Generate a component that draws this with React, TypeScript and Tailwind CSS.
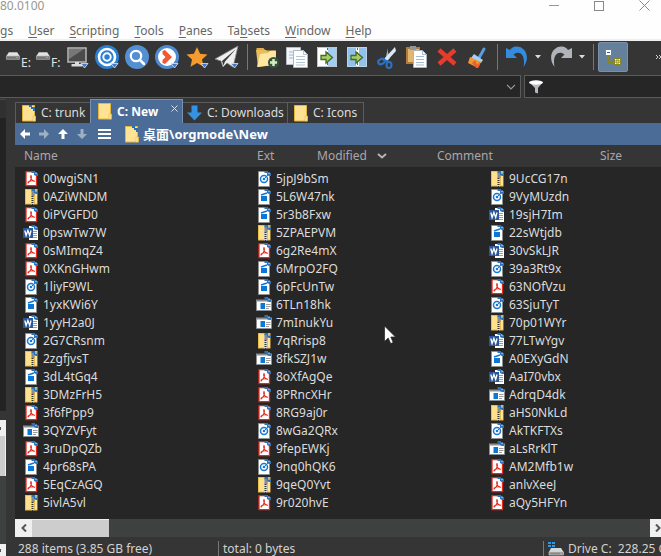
import React from 'react';

type Kind = 'pdf' | 'zip' | 'word' | 'disc' | 'exe' | 'app';

const kinds: Record<string, Kind> = { p: 'pdf', z: 'zip', w: 'word', d: 'disc', e: 'exe', a: 'app' };

const columns: string[][] = [
  ['p 00wgiSN1', 'z 0AZiWNDM', 'p 0iPVGFD0', 'w 0pswTw7W', 'p 0sMImqZ4', 'p 0XKnGHwm', 'd 1liyF9WL', 'e 1yxKWi6Y', 'w 1yyH2a0J', 'd 2G7CRsnm', 'z 2zgfjvsT', 'e 3dL4tGq4', 'z 3DMzFrH5', 'p 3f6fPpp9', 'a 3QYZVFyt', 'p 3ruDpQZb', 'e 4pr68sPA', 'p 5EqCzAGQ', 'z 5ivlA5vl'],
  ['d 5jpJ9bSm', 'e 5L6W47nk', 'e 5r3b8Fxw', 'z 5ZPAEPVM', 'p 6g2Re4mX', 'e 6MrpO2FQ', 'e 6pFcUnTw', 'a 6TLn18hk', 'a 7mInukYu', 'z 7qRrisp8', 'a 8fkSZJ1w', 'p 8oXfAgQe', 'p 8PRncXHr', 'p 8RG9aj0r', 'd 8wGa2QRx', 'p 9fepEWKj', 'd 9nq0hQK6', 'z 9qeQ0Yvt', 'p 9r020hvE'],
  ['z 9UcCG17n', 'd 9VyMUzdn', 'w 19sjH7Im', 'e 22sWtjdb', 'w 30vSkLJR', 'd 39a3Rt9x', 'p 63NOfVzu', 'd 63SjuTyT', 'z 70p01WYr', 'w 77LTwYgv', 'e A0EXyGdN', 'w AaI70vbx', 'a AdrqD4dk', 'z aHS0NkLd', 'd AkTKFTXs', 'a aLsRrKlT', 'p AM2Mfb1w', 'p anlvXeeJ', 'p aQy5HFYn'],
];

function FileIcon({ kind }: { kind: Kind }) {
  return (
    <svg width="16" height="16" viewBox="0 0 16 16" className="shrink-0" aria-hidden="true">
      {kind === 'pdf' && (
        <>
          <path d="M3 .7h8l2.500 2.500v11.500H3z" fill="#fff" stroke="#e8271b" strokeWidth="1.300" strokeLinejoin="round" />
          <path d="M8 4.500c1.200 2.500.2 4.700-3 7.500M8 4.500c-1.200 2.500.5 5 3.500 5.800M5 11.700c-.3-1.300 4-2.700 6.500-1.500" fill="none" stroke="#e8271b" strokeWidth="1.100" strokeLinecap="round" />
        </>
      )}
      {kind === 'zip' && (
        <>
          <path d="M2 0h12.500v15.500H2z" fill="#e9bd4c" />
          <path d="M3 1h5v13.500H3z" fill="#ffe08b" />
          <path d="M12 2h2v12.500h-2z" fill="#ffe59a" />
          <path d="M8 3h3v13H8z" fill="#d9d9d9" />
          <path d="M8.500 2h3v5h-3z" fill="#8b8b8b" />
          <path d="M9.500 7v9" stroke="#333" strokeWidth="2" strokeDasharray="1 1" />
        </>
      )}
      {kind === 'word' && (
        <>
          <path d="M6 1h6l3 3v11H6z" fill="#fff" />
          <path d="M9 6.500h5M9 8.500h5M9 10.500h5M9 12.500h5" stroke="#9b9b9b" />
          <path d="M0 3h10v10H0z" fill="#2b579a" />
          <path d="m1.800 5.500 1.300 5 1.800-5 1.800 5 1.300-5" fill="none" stroke="#fff" strokeWidth="1.300" />
        </>
      )}
      {(kind === 'disc' || kind === 'exe') && (
        <path d="M2.500.5h8L13.500 4v11.500h-11z" fill="#fff" stroke="#8f8f8f" />
      )}
      {kind === 'disc' && (
        <>
          <circle cx="8" cy="8" r="3.500" fill="#fff" stroke="#1879d2" strokeWidth="1.500" />
          <circle cx="8" cy="8" r="1.300" fill="#1879d2" />
          <path d="M9 7l3-3" stroke="#1879d2" />
        </>
      )}
      {kind === 'exe' && (
        <>
          <path d="M5 7h6v5H5z" fill="#0b78d8" />
          <path d="m5 6 6-2" stroke="#0b78d8" strokeWidth="1.500" />
        </>
      )}
      {kind === 'app' && (
        <>
          <path d="M.5 3.500h15v10H.5z" fill="#fff" stroke="#8b8f92" />
          <path d="M0 2.500h16v2H0z" fill="#8b8f92" />
          <path d="M4.500 6h4.500v6H4.500z" fill="#0b78d8" />
          <path d="M10 7.500h4.500M10 9.500h4.500M10 11.500h3" stroke="#9b9b9b" />
        </>
      )}
      <path d="M8.500 0h3.500v2H8.500zM11 2h4v3h-2l-2-1z" fill="#2b73bd" />
      <path d="M12 1.500h2v1.500h-2z" fill="#79aede" />
    </svg>
  );
}

function FolderIcon({ synced = false }: { synced?: boolean }) {
  return (
    <svg width="14" height="17" viewBox="0 0 14 17" className="shrink-0" aria-hidden="true">
      <path d="M.5.500h12v10.500h1v5H.5z" fill="#ffe293" stroke="#e6b63c" />
      <path d="M11 11h2v5h-2z" fill="#ffeeb5" stroke="#e6b63c" strokeWidth=".6" />
      {synced && <path d="M7 0h3v2h3v4h-2V4H9V2H7z" fill="#2471b8" />}
    </svg>
  );
}

const mark = <path d="M16 18.500h7l-3.500 4.500z" fill="#4a78bd" stroke="#dbe8fa" strokeWidth=".8" />;

function Drive() {
  return (
    <>
      <path d="M4 7h9l2.500 4h-14z" fill="#e2e2e2" />
      <path d="M1.500 11h14v3.500h-14z" fill="#777" stroke="#b9b9b9" strokeWidth=".7" />
      <path d="M12 12.500h2" stroke="#70dd49" />
    </>
  );
}

const pages = (
  <>
    <path d="M1.500 2.500h14v17h-14z" fill="#f3f5f8" stroke="#b5bbc4" />
    <path d="M4 7h9M4 10h9M4 13h9" stroke="#9fb6ce" />
    <path d="M8.500 5.500h10l4 4v13h-14z" fill="#fff" stroke="#aeb6c0" />
    <path d="M18.500 5.500v4h4M11 11.500h9M11 14.500h9M11 17.500h9M11 20h9" fill="none" stroke="#b5c6d8" />
  </>
);

const transferArrow = <path d="M6 10.500h5V7l6.500 5.500L11 18v-3.500H6z" fill="#a9cc68" stroke="#446b20" strokeWidth="1.300" />;

const leftTools: { name: string; art: React.ReactNode; drive?: string }[] = [
  { name: 'Drive E', art: <Drive />, drive: 'E:' },
  { name: 'Drive F', art: <Drive />, drive: 'F:' },
  { name: 'Computer', art: <><path d="M3 3h18v14H3z" fill="#4b4b4b" stroke="#b8b8b8" strokeWidth="1.500" /><path d="M4 4h15L4 14z" fill="#777" /><path d="M10 17h4v4h-4zM6.500 19h11v2.500h-11z" fill="#ddd" />{mark}</> },
  { name: 'Target', art: <><circle cx="12" cy="12" r="12" fill="#2a7fd3" /><circle cx="12" cy="12" r="8" fill="none" stroke="#fff" strokeWidth="2.600" /><circle cx="12" cy="12" r="3.700" fill="#2a7fd3" stroke="#fff" strokeWidth="2" />{mark}</> },
  { name: 'Search', art: <><circle cx="12" cy="12" r="12" fill="#548fd2" /><circle cx="11" cy="11" r="5.200" fill="none" stroke="#fff" strokeWidth="2.200" /><path d="m15 15 4 4" stroke="#fff" strokeWidth="2.500" strokeLinecap="round" /></> },
  { name: 'Go to', art: <><circle cx="12" cy="12" r="10.500" fill="#fff" stroke="#4e8bd0" strokeWidth="3" /><path d="M7.500 6 10 5l7 7-7 7-2.500-1v-3l3-3-3-3z" fill="#f05a35" />{mark}</> },
  { name: 'Favorites', art: <><path d="m12 2 3.100 6.700 7.400.8-5.500 5 1.500 7.200L12 18l-6.500 3.700L7 14.500l-5.500-5 7.400-.8z" fill="#f49a2e" />{mark}</> },
  { name: 'Send', art: <><path d="M23 1 0 14l6 2 2 6 4-4 6 4z" fill="#efefef" stroke="#8a8a8a" strokeWidth=".8" strokeLinejoin="round" /><path d="M21 4 7 16l1.500 4.500 1.500-4z" fill="#3a3a3a" />{mark}</> },
];

const editTools: { name: string; art: React.ReactNode }[] = [
  { name: 'New folder', art: <><path d="M1.500 5.500V3h7l2 2.500h9V8" fill="#e4ae43" /><path d="M1 5h10l2 2h8v13L3 22z" fill="#e9bd5b" /><path d="m5 9 8-1 2-2 6-.5-1 14L2 22z" fill="#ffe7a0" /><circle cx="18.500" cy="17.500" r="5.500" fill="#36513f" /><path d="M18.500 14v7M15 17.500h7" stroke="#d7efbd" strokeWidth="2.500" /></> },
  { name: 'Copy', art: pages },
  { name: 'Copy to other pane', art: <><path d="M2 2h20v20H2z" fill="#fff" /><path d="M13 3h9v18h-9z" fill="#a3cdf1" /><path d="M12.500 2v20" stroke="#526579" strokeDasharray="3 2" /><path d="M2.500 2.500h19v19h-19z" fill="none" stroke="#b8c5d1" />{transferArrow}</> },
  { name: 'Move to other pane', art: <><path d="M2 2h20v20H2z" fill="#92c2eb" /><path d="M12.500 2v20" stroke="#fff" strokeWidth="3" /><path d="M12.500 2v20" stroke="#526579" strokeDasharray="3 2" /><path d="M2.500 2.500h19v19h-19z" fill="none" stroke="#bbd3e7" />{transferArrow}</> },
  { name: 'Cut', art: <><path d="M13 1c-1 3 0 8 2 12l-3 3-1-4z" fill="#8eb6dc" /><path d="m20 2 1 4-10 11-3-2z" fill="#dce7f3" /><ellipse cx="6.500" cy="16.500" rx="3.500" ry="2.500" transform="rotate(-25 6.500 16.500)" fill="none" stroke="#2a72c6" strokeWidth="2" /><ellipse cx="14" cy="20" rx="2.500" ry="3" fill="none" stroke="#2a72c6" strokeWidth="2" /><path d="m9 15 5 2" stroke="#2a72c6" strokeWidth="2" /></> },
  { name: 'Paste', art: <><path d="M1 2h14v17H1z" fill="#b47a38" /><path d="M3 4h11v13H3z" fill="#e2b771" /><path d="M5 1h6v4H5z" fill="#8e969e" /><path d="M8.500 5.500h9l4 4v13h-13z" fill="#fff" stroke="#aab4c1" /><path d="M17.500 5.500v4h4M11 11.500h8M11 14.500h8M11 17.500h8M11 20h8" fill="none" stroke="#a6bbd1" /></> },
  { name: 'Delete', art: <path d="m4 5 16 14M20 5 4 19" stroke="#e83b2c" strokeWidth="4.500" /> },
  { name: 'Clean up', art: <><path d="m19 4-5 9" stroke="#5c9bdc" strokeWidth="3" strokeLinecap="round" /><path d="m9 9 9 6-2 3-10-5z" fill="#a3d0f6" /><path d="m5 12 11 5-3 6-10-5z" fill="#f19632" /><path d="m7 18 3-3 2 5 3-3-1 5-3 1z" fill="#ee5c30" /></> },
];

const toolClass = 'flex h-[30px] w-[30px] shrink-0 items-center justify-center';

function ToolIcon({ children }: { children: React.ReactNode }) {
  return <svg width="24" height="24" viewBox="0 0 24 24" className="shrink-0" aria-hidden="true">{children}</svg>;
}

function Divider() {
  return <div className="flex h-[26px] w-[10px] shrink-0 justify-center"><div className="w-px bg-[#777]" /></div>;
}

function DropArrow({ name }: { name: string }) {
  return (
    <button aria-label={name} className="flex h-[30px] w-3 shrink-0 items-center justify-center">
      <svg width="6" height="4" viewBox="0 0 6 4" aria-hidden="true"><path d="M0 0h6L3 3.500z" fill="#d8dde2" /></svg>
    </button>
  );
}

const menus: [string, string, string][] = [['', 'U', 'ser'], ['', 'S', 'cripting'], ['', 'T', 'ools'], ['', 'P', 'anes'], ['Ta', 'b', 'sets'], ['', 'W', 'indow'], ['', 'H', 'elp']];

function NavArrow({ name, d, dim = false }: { name: string; d: string; dim?: boolean }) {
  return (
    <button aria-label={name} className="flex h-full w-[19px] items-center justify-center">
      <svg width="10" height="10" viewBox="0 0 10 10" aria-hidden="true" fill={dim ? '#9fb0c5' : '#fff'}><path d={d} /></svg>
    </button>
  );
}

function SideStrip() {
  return (
    <div className="flex w-[15px] shrink-0 flex-col pr-[9px]">
      <div className="h-[19px] border-t border-[#444] bg-[#303030]" />
      <div className="min-h-[293px] flex-1 bg-[#232323]" />
      <div className="h-[9px]" />
      <div className="flex h-4 items-center bg-[#f0f0f0]"><div className="h-[3px] w-px bg-[#555]" /></div>
      <div className="h-10 border-r border-[#eee] bg-[#cdcdcd]" />
      <div className="h-[68px] bg-[#3e4140]" />
      <div className="flex h-[13px] items-center bg-[#f0f0f0]"><div className="h-[3px] w-px bg-[#555]" /></div>
    </div>
  );
}

export default function App() {
  return (
    <div className="relative flex min-h-screen w-full flex-col overflow-hidden bg-[#353535] font-['Noto_Sans','Noto_Sans_CJK_SC',sans-serif] text-[12px] leading-4 text-[#dcdcdc]">
      <header className="h-[41px] border-b-2 border-[#efefef] bg-[#fefefe] text-[#666]">
        <div className="flex h-[23px] justify-between">
          <span className="leading-[11px] text-[#99988b]">80.0100</span>
          <div className="flex">
            <button aria-label="Minimize" className="flex h-[11px] w-[45px] items-center justify-center"><span className="h-px w-[10px] bg-[#999]" /></button>
            <button aria-label="Maximize" className="flex h-[11px] w-[45px] items-center justify-center"><span className="h-[10px] w-[10px] border border-[#888]" /></button>
            <button aria-label="Close" className="flex h-[11px] w-[40px] items-center justify-center pl-[6px]">
              <svg width="11" height="11" viewBox="0 0 11 11" aria-hidden="true"><path d="m.5.500 10 10m0-10-10 10" stroke="#888" /></svg>
            </button>
          </div>
        </div>
        <nav aria-label="Main menu" className="flex gap-[15px]">
          <button>gs</button>
          {menus.map(([before, key, after]) => (
            <button key={key + after}>{before}<span className="underline decoration-1 underline-offset-2">{key}</span>{after}</button>
          ))}
        </nav>
      </header>

      <div role="toolbar" aria-label="Main toolbar" className="flex h-[34px] items-center overflow-hidden pb-[2px] pl-[2px]">
        {leftTools.map((tool) => (
          <button key={tool.name} aria-label={tool.name} className={toolClass}>
            {tool.drive ? (
              <span className="flex h-6 w-6 items-start">
                <svg width="16" height="24" viewBox="0 0 17 24" className="shrink-0" aria-hidden="true">{tool.art}</svg>
                <span className="mt-[10px] text-[12px] leading-4 text-[#e4e4e4]">{tool.drive}</span>
              </span>
            ) : <ToolIcon>{tool.art}</ToolIcon>}
          </button>
        ))}
        <Divider />
        {editTools.map((tool) => (
          <button key={tool.name} aria-label={tool.name} className={toolClass}><ToolIcon>{tool.art}</ToolIcon></button>
        ))}
        <Divider />
        <button aria-label="Undo" className={toolClass}>
          <ToolIcon><path d="M1 3v10h11L8.500 9.500C14 5 21 9 18.500 22 26 12 20 1 11 1.500 8.500 1.700 6.500 2.500 5 5z" fill="#358cdd" /></ToolIcon>
        </button>
        <DropArrow name="Undo history" />
        <button aria-label="Redo" className={`${toolClass} ml-[2px]`}>
          <ToolIcon><path d="M23 3v10H12l3.500-3.500C10 5 3 9 5.500 22-2 12 4 1 13 1.500c2.500.2 4.500 1 6 3.500z" fill="#b0b4ba" /></ToolIcon>
        </button>
        <DropArrow name="Redo history" />
        <Divider />
        <button aria-label="Folder tree" className="flex h-[30px] w-[30px] shrink-0 items-center justify-center rounded-[2px] border border-[#7890a9] bg-[#64809c]">
          <ToolIcon><path d="M7.500 10v7.500H14" fill="none" stroke="#898719" strokeWidth="2.500" /><path d="M4.500 4.500h6v6h-6zM13.500 13.500h6v6h-6z" fill="#fff" stroke="#898719" /><path d="M15 15h3v3h-3z" fill="#ddd9a0" stroke="#898719" /><path d="M6 7.500h3" stroke="#345e95" /></ToolIcon>
        </button>
        <button aria-label="More tools" className="ml-auto w-[6px] shrink-0 overflow-hidden">
          <svg width="8" height="6" viewBox="0 0 8 6" aria-hidden="true"><path d="m1 1 2 2-2 2m3-4 2 2-2 2" fill="none" stroke="#d0d0d0" /></svg>
        </button>
      </div>

      <div className="flex h-[23px] gap-[3px]">
        <label className="flex min-w-0 flex-[524] items-center border border-l-0 border-[#5a5a5a] bg-[#262626] pr-1">
          <input aria-label="Address" className="w-full min-w-0 bg-transparent outline-none" />
          <svg width="10" height="6" viewBox="0 0 10 6" className="shrink-0" aria-hidden="true"><path d="m1 .8 4 4 4-4" fill="none" stroke="#999" strokeWidth="1.200" /></svg>
        </label>
        <label className="flex min-w-0 flex-[134] items-center border border-r-0 border-[#5a5a5a] bg-[#262626] pl-1">
          <svg width="14" height="14" viewBox="0 0 14 14" className="shrink-0" aria-hidden="true"><path d="M0 2h14l-5 6v5.500l-3-1V8z" fill="#b6b8be" /><ellipse cx="7" cy="2.500" rx="7" ry="2.200" fill="#fff" /></svg>
          <input aria-label="Filter" className="w-full min-w-0 bg-transparent outline-none" />
        </label>
      </div>

      <div className="flex flex-1 pt-px">
        <SideStrip />
        <main className="flex min-w-0 flex-1 flex-col">
          <div role="tablist" className="flex h-6 items-end">
            <button role="tab" aria-selected="false" className="flex h-[21px] w-[75px] shrink-0 items-center gap-[5px] border-t border-l border-[#5c5c5c] pl-[6px] whitespace-nowrap"><FolderIcon synced />C: trunk</button>
            <div className="flex h-6 w-[93px] shrink-0 border border-b-0 border-[#7891b0] bg-[#4b6c97]">
              <button role="tab" aria-selected="true" className="flex items-center gap-[5px] pl-[7px] font-bold whitespace-nowrap text-white"><FolderIcon />C: New</button>
              <button aria-label="Close tab" className="mt-[5px] mr-1 ml-auto flex h-[7px] w-[7px] items-center">
                <svg width="7" height="7" viewBox="0 0 7 7" aria-hidden="true"><path d="m.5.500 6 6m0-6-6 6" stroke="#d8e2ee" /></svg>
              </button>
            </div>
            <button role="tab" aria-selected="false" className="flex h-[21px] w-[104px] shrink-0 items-center gap-[5px] border-t border-[#5c5c5c] pl-[4px] whitespace-nowrap">
              <svg width="15" height="16" viewBox="0 0 15 16" className="shrink-0" aria-hidden="true"><path d="M4.500.500h6v7H15L7.500 15.500 0 7.500h4.500z" fill="#3492e2" /></svg>
              C: Downloads
            </button>
            <button role="tab" aria-selected="false" className="flex h-[21px] w-[77px] shrink-0 items-center gap-[5px] border-x border-t border-[#5c5c5c] pl-[6px] whitespace-nowrap"><FolderIcon />C: Icons</button>
          </div>

          <nav aria-label="Location" className="flex h-[22px] items-center bg-[#4b6c97] text-white">
            <NavArrow name="Back" d="M0 5 5 0v3.500h5v3H5V10z" />
            <NavArrow name="Forward" d="M10 5 5 0v3.500H0v3h5V10z" dim />
            <NavArrow name="Up" d="M5 0 0 5h3.500v5h3V5H10z" />
            <NavArrow name="Down" d="M5 10 0 5h3.500V0h3v5H10z" dim />
            <button aria-label="Menu" className="ml-[7px] flex w-[13px] flex-col gap-[2px]"><span className="h-[2px] w-full bg-white" /><span className="h-[2px] w-full bg-white" /><span className="h-[2px] w-full bg-white" /></button>
            <span className="ml-[14px] flex items-center gap-1 text-[13px] font-bold whitespace-nowrap"><FolderIcon synced />桌面\orgmode\New</span>
          </nav>

          <div className="flex h-[22px] items-center pl-[9px] text-[#aaa6ad]">
            <button className="w-[233px] shrink-0 text-left">Name</button>
            <button className="w-[60px] shrink-0 text-left">Ext</button>
            <button className="flex w-[120px] shrink-0 items-center">
              <span className="w-[60px] text-left">Modified</span>
              <svg width="10" height="6" viewBox="0 0 10 6" aria-hidden="true"><path d="m1 1 4 3.500L9 1" fill="none" stroke="#b5b5b5" strokeWidth="2" /></svg>
            </button>
            <button className="w-[163px] shrink-0 text-left">Comment</button>
            <button className="text-left">Size</button>
          </div>

          <div className="flex flex-1 overflow-hidden bg-[#262626] pt-[3px] pb-[7px] pl-2">
            {columns.map((column, i) => (
              <ul key={i} className="w-[233px] shrink-0">
                {column.map((file) => (
                  <li key={file} className="flex h-[18px] items-center gap-1"><FileIcon kind={kinds[file[0]]} />{file.slice(2)}</li>
                ))}
              </ul>
            ))}
          </div>

          <div className="flex h-[18px] bg-[#3e4140]">
            <button aria-label="Scroll left" className="flex w-[17px] items-center justify-center bg-[#f0f0f0]"><svg width="6" height="8" viewBox="0 0 6 8" aria-hidden="true"><path d="M5 .5 1.500 4 5 7.500" fill="none" stroke="#555" strokeWidth="2" /></svg></button>
            <div className="w-[77px] border-t border-[#eee] bg-[#cdcdcd]" />
            <button aria-label="Scroll right" className="ml-auto flex w-[11px] items-center justify-end bg-[#f0f0f0]"><svg width="6" height="8" viewBox="0 0 6 8" aria-hidden="true"><path d="M1 .5 4.500 4 1 7.500" fill="none" stroke="#555" strokeWidth="2" /></svg></button>
          </div>

          <footer className="flex h-5 items-end overflow-hidden whitespace-nowrap text-[#d2d2d2]">
            <div className="w-[203px] shrink-0 pl-[3px]">288 items (3.85 GB free)</div>
            <div className="min-w-0 flex-1 border-l border-[#777] pl-1">total: 0 bytes</div>
            <div className="flex w-[118px] shrink-0 items-center gap-1 border-l border-[#777] pl-1">
              <svg width="16" height="16" viewBox="0 0 16 16" className="shrink-0" aria-hidden="true"><path d="M0 1h3v2H0zM4 1h3v2H4zM0 4h3v2H0zM4 4h3v2H4z" fill="#249bed" /><path d="M3 7h10l2.500 4H1z" fill="#d7d7d7" /><path d="M1 11h14.500v3H1z" fill="#888" stroke="#ccc" strokeWidth=".7" /><path d="M12 12.500h2" stroke="#70dd49" /></svg>
              <span className="whitespace-pre">Drive C:  228.25 GB</span>
            </div>
          </footer>
        </main>
      </div>

      <svg width="12" height="19" viewBox="0 0 12 19" className="pointer-events-none absolute top-[325px] left-[384px]" aria-hidden="true"><path d="M.5 1v15.500L4.200 13l2.500 5.500L9.200 17.500 6.800 12H11.500z" fill="#fff" stroke="#222" strokeWidth=".7" /></svg>
    </div>
  );
}
